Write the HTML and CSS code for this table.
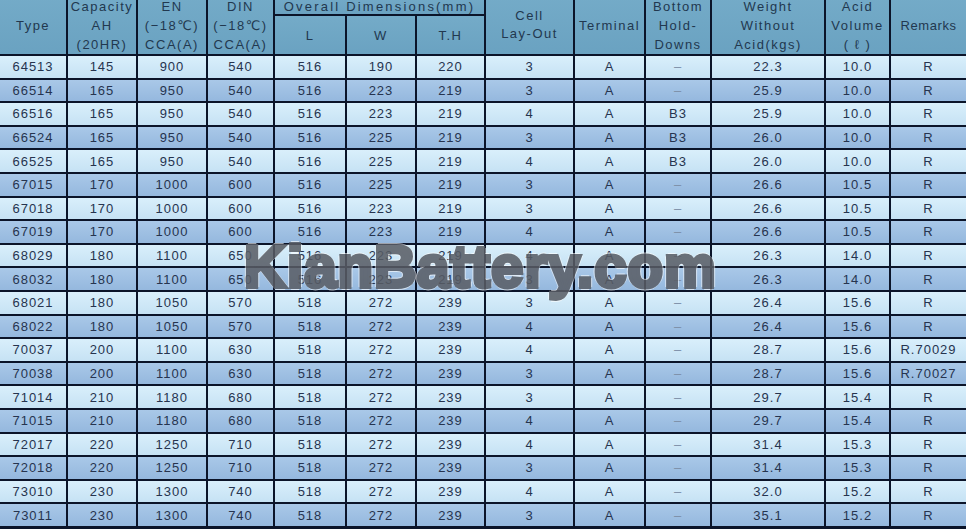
FILE: index.html
```html
<!DOCTYPE html>
<html>
<head>
<meta charset="utf-8">
<link rel="stylesheet" href="styles.css">
</head>
<body>
<div class="sheet">
  <div class="grid">
    <div class="h span2 c1">Type</div>
    <div class="h span2 c2 three"><span>Capacity</span><span>AH</span><span>(20HR)</span></div>
    <div class="h span2 c3 three"><span>EN</span><span>(−18℃)</span><span>CCA(A)</span></div>
    <div class="h span2 c4 three"><span>DIN</span><span>(−18℃)</span><span>CCA(A)</span></div>
    <div class="h overall">Overall Dimensions(mm)</div>
    <div class="h span2 c8 two"><span>Cell</span><span>Lay-Out</span></div>
    <div class="h span2 c9">Terminal</div>
    <div class="h span2 c10 three"><span>Bottom</span><span>Hold-</span><span>Downs</span></div>
    <div class="h span2 c11 three"><span>Weight</span><span>Without</span><span>Acid(kgs)</span></div>
    <div class="h span2 c12 three"><span>Acid</span><span>Volume</span><span>( ℓ )</span></div>
    <div class="h span2 c13">Remarks</div>
    <div class="h sub c5">L</div>
    <div class="h sub c6">W</div>
    <div class="h sub c7">T.H</div>

    <div class="row lt"><div>64513</div><div>145</div><div>900</div><div>540</div><div>516</div><div>190</div><div>220</div><div>3</div><div>A</div><div class="dash">–</div><div>22.3</div><div>10.0</div><div>R</div></div>
    <div class="row dk"><div>66514</div><div>165</div><div>950</div><div>540</div><div>516</div><div>223</div><div>219</div><div>3</div><div>A</div><div class="dash">–</div><div>25.9</div><div>10.0</div><div>R</div></div>
    <div class="row lt"><div>66516</div><div>165</div><div>950</div><div>540</div><div>516</div><div>223</div><div>219</div><div>4</div><div>A</div><div>B3</div><div>25.9</div><div>10.0</div><div>R</div></div>
    <div class="row dk"><div>66524</div><div>165</div><div>950</div><div>540</div><div>516</div><div>225</div><div>219</div><div>3</div><div>A</div><div>B3</div><div>26.0</div><div>10.0</div><div>R</div></div>
    <div class="row lt"><div>66525</div><div>165</div><div>950</div><div>540</div><div>516</div><div>225</div><div>219</div><div>4</div><div>A</div><div>B3</div><div>26.0</div><div>10.0</div><div>R</div></div>
    <div class="row dk"><div>67015</div><div>170</div><div>1000</div><div>600</div><div>516</div><div>225</div><div>219</div><div>3</div><div>A</div><div class="dash">–</div><div>26.6</div><div>10.5</div><div>R</div></div>
    <div class="row lt"><div>67018</div><div>170</div><div>1000</div><div>600</div><div>516</div><div>223</div><div>219</div><div>3</div><div>A</div><div class="dash">–</div><div>26.6</div><div>10.5</div><div>R</div></div>
    <div class="row dk"><div>67019</div><div>170</div><div>1000</div><div>600</div><div>516</div><div>223</div><div>219</div><div>4</div><div>A</div><div class="dash">–</div><div>26.6</div><div>10.5</div><div>R</div></div>
    <div class="row lt"><div>68029</div><div>180</div><div>1100</div><div>650</div><div>516</div><div>223</div><div>219</div><div>4</div><div>A</div><div class="dash">–</div><div>26.3</div><div>14.0</div><div>R</div></div>
    <div class="row dk"><div>68032</div><div>180</div><div>1100</div><div>650</div><div>516</div><div>223</div><div>219</div><div>3</div><div>A</div><div class="dash">–</div><div>26.3</div><div>14.0</div><div>R</div></div>
    <div class="row lt"><div>68021</div><div>180</div><div>1050</div><div>570</div><div>518</div><div>272</div><div>239</div><div>3</div><div>A</div><div class="dash">–</div><div>26.4</div><div>15.6</div><div>R</div></div>
    <div class="row dk"><div>68022</div><div>180</div><div>1050</div><div>570</div><div>518</div><div>272</div><div>239</div><div>4</div><div>A</div><div class="dash">–</div><div>26.4</div><div>15.6</div><div>R</div></div>
    <div class="row lt"><div>70037</div><div>200</div><div>1100</div><div>630</div><div>518</div><div>272</div><div>239</div><div>4</div><div>A</div><div class="dash">–</div><div>28.7</div><div>15.6</div><div>R.70029</div></div>
    <div class="row dk"><div>70038</div><div>200</div><div>1100</div><div>630</div><div>518</div><div>272</div><div>239</div><div>3</div><div>A</div><div class="dash">–</div><div>28.7</div><div>15.6</div><div>R.70027</div></div>
    <div class="row lt"><div>71014</div><div>210</div><div>1180</div><div>680</div><div>518</div><div>272</div><div>239</div><div>3</div><div>A</div><div class="dash">–</div><div>29.7</div><div>15.4</div><div>R</div></div>
    <div class="row dk"><div>71015</div><div>210</div><div>1180</div><div>680</div><div>518</div><div>272</div><div>239</div><div>4</div><div>A</div><div class="dash">–</div><div>29.7</div><div>15.4</div><div>R</div></div>
    <div class="row lt"><div>72017</div><div>220</div><div>1250</div><div>710</div><div>518</div><div>272</div><div>239</div><div>4</div><div>A</div><div class="dash">–</div><div>31.4</div><div>15.3</div><div>R</div></div>
    <div class="row dk"><div>72018</div><div>220</div><div>1250</div><div>710</div><div>518</div><div>272</div><div>239</div><div>3</div><div>A</div><div class="dash">–</div><div>31.4</div><div>15.3</div><div>R</div></div>
    <div class="row lt"><div>73010</div><div>230</div><div>1300</div><div>740</div><div>518</div><div>272</div><div>239</div><div>4</div><div>A</div><div class="dash">–</div><div>32.0</div><div>15.2</div><div>R</div></div>
    <div class="row dk"><div>73011</div><div>230</div><div>1300</div><div>740</div><div>518</div><div>272</div><div>239</div><div>3</div><div>A</div><div class="dash">–</div><div>35.1</div><div>15.2</div><div>R</div></div>
  </div>
  <div class="watermark">KianBattery.com</div>
</div>
</body>
</html>
```

FILE: styles.css
```css
html, body {
  margin: 0;
  padding: 0;
  background: #0d1730;
  overflow: hidden;
}

.sheet {
  position: relative;
  width: 966px;
  height: 529px;
  overflow: hidden;
  font-family: "Liberation Sans", Arial, "DejaVu Sans", sans-serif;
  color: #25344f;
}

.grid {
  display: grid;
  grid-template-columns: 66px 68px 68px 65px 70px 68px 67px 87px 69px 64px 112px 63px 75px;
  grid-template-rows: 18px 38px repeat(20, 21.6px);
  gap: 2px;
  margin-top: -4px;
  background: #0b1429;
  padding-bottom: 3px;
  border-bottom: 2px solid #1d5486;
}

.h {
  background: linear-gradient(#74abc8, #6aa2c1);
  display: flex;
  flex-direction: column;
  align-items: center;
  justify-content: center;
  font-size: 13px;
  letter-spacing: 1.5px;
  color: #22384f;
  line-height: 19px;
  text-align: center;
  white-space: nowrap;
}

.h.span2 { grid-row: 1 / span 2; }
.h.two { line-height: 18px; }
.h.three { line-height: 19px; }

.c1 { grid-column: 1; }
.c2 { grid-column: 2; }
.c3 { grid-column: 3; }
.c4 { grid-column: 4; }
.c5 { grid-column: 5; }
.c6 { grid-column: 6; }
.c7 { grid-column: 7; }
.c8 { grid-column: 8; }
.c9 { grid-column: 9; }
.c10 { grid-column: 10; }
.c11 { grid-column: 11; }
.c12 { grid-column: 12; }
.c13 { grid-column: 13; letter-spacing: 0.6px; }

.overall {
  grid-column: 5 / span 3;
  grid-row: 1;
  letter-spacing: 2.2px;
  padding-top: 2px;
}

.h.sub { grid-row: 2; }

.row { display: contents; }

.row > div {
  display: flex;
  align-items: center;
  justify-content: center;
  font-size: 13px;
  letter-spacing: 1px;
  color: #26344f;
  white-space: nowrap;
}

.row.lt > div {
  background: linear-gradient(#d9effb, #c6e2f4);
}

.row.dk > div {
  background: linear-gradient(#a9c8e8, #95b8de);
}

.row > .dash {
  color: #7d8fa8;
}

.watermark {
  position: absolute;
  left: 244px;
  top: 237px;
  font-family: "Liberation Sans", Arial, sans-serif;
  font-weight: bold;
  font-size: 60px;
  line-height: 60px;
  letter-spacing: 1px;
  white-space: nowrap;
  color: #595d65;
  -webkit-text-stroke: 4px #595d65;
  opacity: 0.86;
  transform: scaleX(0.97);
  transform-origin: left top;
  text-shadow: 0 3px 0 rgba(255,255,255,0.7), 0 -3px 0 rgba(255,255,255,0.7), 3px 0 0 rgba(255,255,255,0.6), -3px 0 0 rgba(255,255,255,0.6);
}
```
